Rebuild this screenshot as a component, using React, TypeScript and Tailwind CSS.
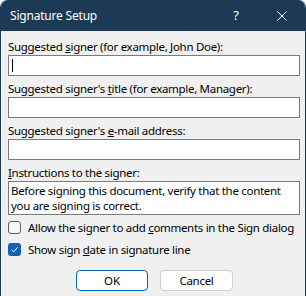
import React from 'react'

const font = { fontFamily: '"Noto Sans", "Open Sans", sans-serif' }

function Field({ label, children }: { label: React.ReactNode; children?: React.ReactNode }) {
  return (
    <div className="flex flex-col">
      <div className="h-[16px] leading-[16px] text-[11.5px] tracking-[-0.3px] text-black">{label}</div>
      <div className="h-[21px] border border-[#7a7a7a] bg-white relative">{children}</div>
    </div>
  )
}

function CheckRow({ checked, children }: { checked?: boolean; children: React.ReactNode }) {
  return (
    <div className="flex items-center gap-[7px] h-[13px]">
      {checked ? (
        <span className="w-[13px] h-[13px] shrink-0 rounded-[3px] bg-[#1260b8] flex items-center justify-center">
          <svg width="9" height="9" viewBox="0 0 9 9" fill="none">
            <path d="M1.5 4.8 L3.6 6.8 L7.6 2.3" stroke="white" strokeWidth="1" />
          </svg>
        </span>
      ) : (
        <span className="w-[13px] h-[13px] shrink-0 rounded-[3px] border border-[#5c5c5c] bg-[#f7f7f7]" />
      )}
      <span className="text-[11.5px] tracking-[-0.3px] leading-[16px] text-black whitespace-nowrap">{children}</span>
    </div>
  )
}

export default function App() {
  return (
    <div className="w-[306px] h-[296px] bg-white" style={font}>
      <div className="h-full flex flex-col rounded-t-[8px] overflow-hidden border-x border-[#1c3a56] bg-[#f0f0f0]">
        <div className="h-[31px] shrink-0 bg-[#1c3a56] text-white flex items-center pl-[9px]">
          <span className="text-[12px] tracking-[-0.2px] flex-1">Signature Setup</span>
          <span className="text-[13px] w-[46px] text-center">?</span>
          <span className="w-[46px] flex justify-center">
            <svg width="10" height="10" viewBox="0 0 10 10">
              <path d="M0.5 0.5 L9.5 9.5 M9.5 0.5 L0.5 9.5" stroke="white" strokeWidth="1" />
            </svg>
          </span>
        </div>
        <div className="flex flex-col pl-[7px] pr-[5px] pt-[8px]">
          <Field label={<>Suggested <u>s</u>igner (for example, John Doe):</>}>
            <span className="absolute left-[3px] top-[3px] w-px h-[13px] bg-black" />
          </Field>
          <div className="h-[5px]" />
          <Field label={<>Suggested signer's <u>t</u>itle (for example, Manager):</>} />
          <div className="h-[5px]" />
          <Field label={<>Suggested signer's <u>e</u>-mail address:</>} />
          <div className="h-[5px] " />
          <div className="h-[16px] leading-[16px] text-[11.5px] tracking-[-0.3px] text-black">
            <u>I</u>nstructions to the signer:
          </div>
          <div className="h-[34px] border border-[#7a7a7a] bg-white px-[2px] pt-[1px] text-[11.5px] tracking-[-0.3px] leading-[15px] text-black">
            Before signing this document, verify that the content you are signing is correct.
          </div>
          <div className="flex flex-col gap-[9px] pt-[6px]">
            <CheckRow>
              Allow the signer to add <u>c</u>omments in the Sign dialog
            </CheckRow>
            <CheckRow checked>
              Show sign <u>d</u>ate in signature line
            </CheckRow>
          </div>
          <div className="flex gap-[12px] pl-[68px] pt-[14px]">
            <button className="w-[72px] h-[21px] rounded-[4px] border border-[#0067c0] bg-white text-[11.5px] text-black">
              OK
            </button>
            <button className="w-[73px] h-[21px] rounded-[4px] border border-[#d0d0d0] bg-[#fdfdfd] text-[11.5px] tracking-[-0.3px] text-black">
              Cancel
            </button>
          </div>
        </div>
      </div>
    </div>
  )
}
